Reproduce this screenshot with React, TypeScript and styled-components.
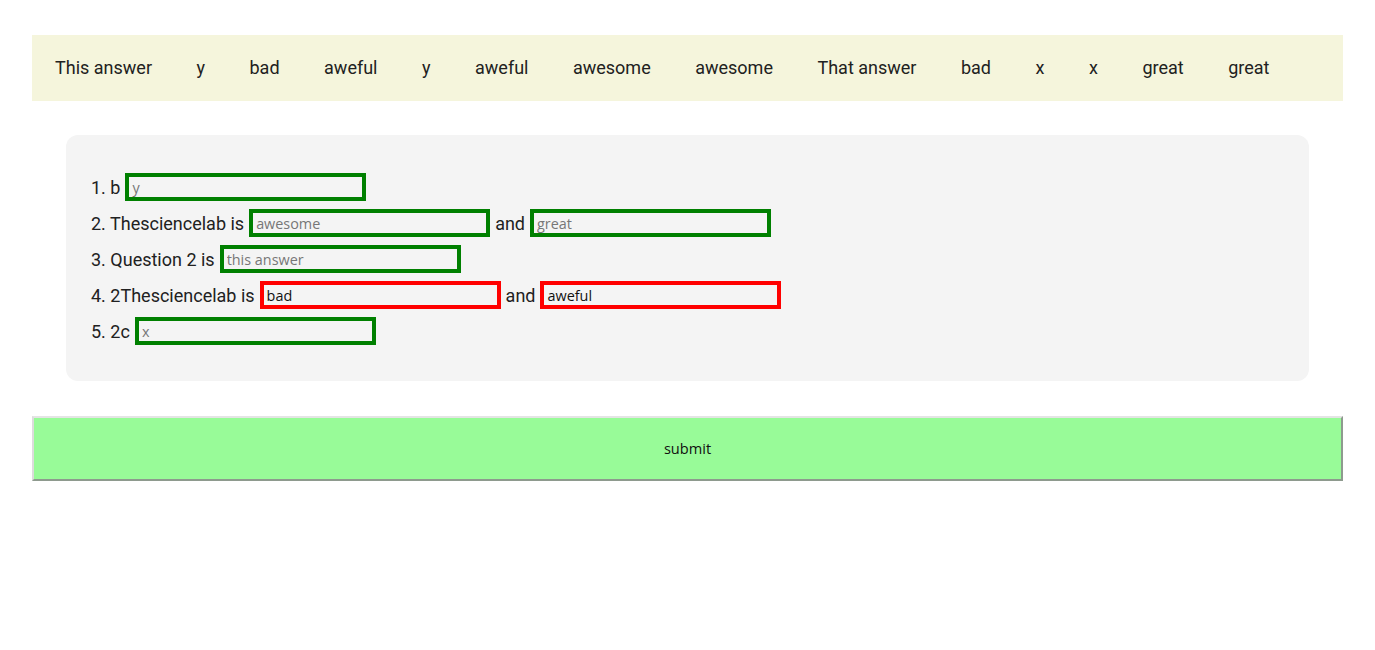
import React from "react";
import styled, { createGlobalStyle } from "styled-components";

const Global = createGlobalStyle`
  html, body { margin: 0; padding: 0; background: #ffffff; }
  body { font-family: Roboto, "Liberation Sans", sans-serif; color: #212121; }
`;

const Page = styled.div`
  padding: 35px 32px 0;
  display: flex;
  flex-direction: column;
  gap: 34px;
`;

const WordBank = styled.div`
  background: #f5f5dc;
  height: 66px;
  display: flex;
  align-items: center;
  gap: 44.5px;
  padding-left: 23px;
  padding-bottom: 1px;
  box-sizing: border-box;
  font-size: 18px;
`;

const Word = styled.span`
  white-space: nowrap;
`;

const Panel = styled.div`
  margin: 0 34px;
  background: #f4f4f4;
  border-radius: 12px;
  padding: 38px 25px 36px;
  display: flex;
  flex-direction: column;
  gap: 8px;
  font-size: 18px;
`;

const Row = styled.div`
  display: flex;
  align-items: center;
  gap: 5px;
  height: 28px;
`;

const Joiner = styled.span``;

const Blank = styled.input<{ $state: "ok" | "bad" }>`
  box-sizing: border-box;
  width: 241px;
  height: 28px;
  border: 4px solid ${(p) => (p.$state === "ok" ? "#008000" : "#ff0000")};
  background: #f4f4f4;
  padding: 0 3px;
  font-family: "Open Sans", "DejaVu Sans", sans-serif;
  font-size: 14.4px;
  color: #111;
  outline: none;
  &::placeholder { color: #777; }
`;

const Submit = styled.button`
  height: 65px;
  background: #98fb98;
  border-style: solid;
  border-width: 2px;
  border-color: #e4e4e4 #8e9a8e #8e9a8e #dcdcdc;
  font-family: "Open Sans", "DejaVu Sans", sans-serif;
  font-size: 14.6px;
  color: #111;
  cursor: pointer;
  margin-top: 1px;
  padding-bottom: 2px;
`;

const words = [
  "This answer", "y", "bad", "aweful", "y", "aweful", "awesome", "awesome",
  "That answer", "bad", "x", "x", "great", "great",
];

export default function App() {
  return (
    <>
      <Global />
      <Page>
        <WordBank>
          {words.map((w, i) => (
            <Word key={i}>{w}</Word>
          ))}
        </WordBank>
        <Panel>
          <Row>
            <span>1. b</span>
            <Blank $state="ok" placeholder="y" readOnly />
          </Row>
          <Row>
            <span>2. Thesciencelab is</span>
            <Blank $state="ok" placeholder="awesome" readOnly />
            <Joiner>and</Joiner>
            <Blank $state="ok" placeholder="great" readOnly />
          </Row>
          <Row>
            <span>3. Question 2 is</span>
            <Blank $state="ok" placeholder="this answer" readOnly />
          </Row>
          <Row>
            <span>4. 2Thesciencelab is</span>
            <Blank $state="bad" defaultValue="bad" readOnly />
            <Joiner>and</Joiner>
            <Blank $state="bad" defaultValue="aweful" readOnly />
          </Row>
          <Row>
            <span>5. 2c</span>
            <Blank $state="ok" placeholder="x" readOnly />
          </Row>
        </Panel>
        <Submit>submit</Submit>
      </Page>
    </>
  );
}
